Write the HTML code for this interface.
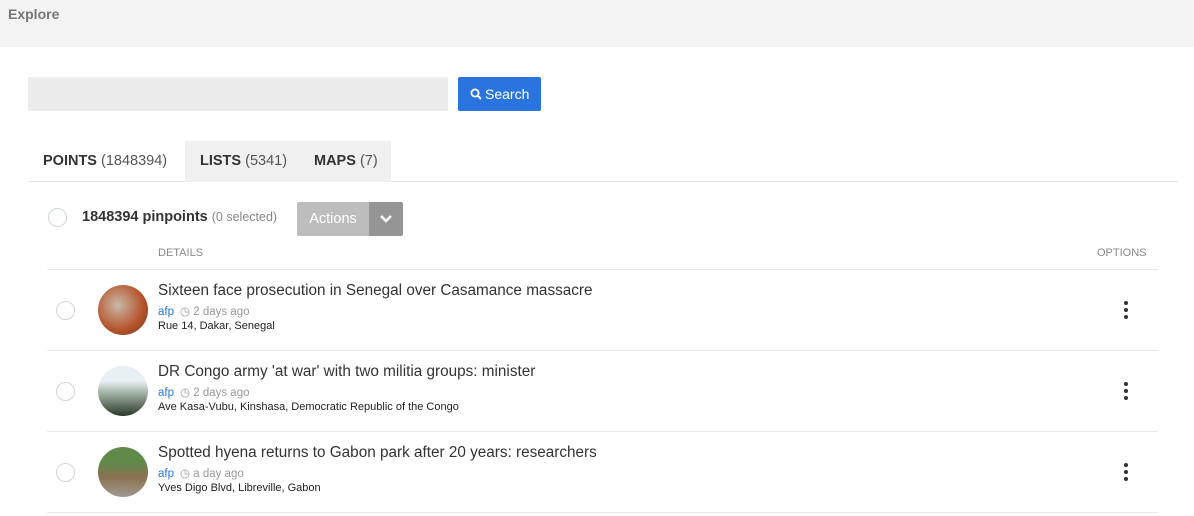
<!DOCTYPE html>
<html><head><style>
*{box-sizing:border-box;margin:0;padding:0}
body{width:1194px;height:516px;overflow:hidden;background:#fff;font-family:"Liberation Sans",sans-serif;color:#333;position:relative}
.top{position:absolute;left:0;top:0;width:1194px;height:47px;background:#f3f3f3}
.top span{position:absolute;left:8px;top:6px;font-size:14px;font-weight:bold;color:#777}
.inp{position:absolute;left:28px;top:77px;width:420px;height:34px;background:#ececec;border-radius:2px}
.btn{position:absolute;left:458px;top:77px;width:83px;height:34px;background:#2a74e0;border-radius:2px;color:#fff;font-size:14px;line-height:34px;padding-left:12px}
.tabs{position:absolute;left:28px;top:141px;width:1150px;height:41px;border-bottom:1px solid #e4e4e4}
.tab{position:absolute;top:0;height:41px;line-height:41px;font-size:14.5px;color:#444}
.tab b{color:#333}
.tab span{color:#555}
.circ{position:absolute;width:19px;height:19px;border:1px solid #cdd6dc;border-radius:50%}
.act{position:absolute;left:297px;top:202px;width:106px;height:34px;border-radius:2px;overflow:hidden}
.act .a{position:absolute;left:0;top:0;width:72px;height:34px;background:#bdbdbd;color:#fff;font-size:14.5px;line-height:34px;text-align:center}
.act .d{position:absolute;left:72px;top:0;width:34px;height:34px;background:#959595}
.hdr{position:absolute;top:247px;font-size:11px;color:#888}
.row{position:absolute;left:47px;width:1111px;height:81px;border-top:1px solid #e4eaee}
.av{position:absolute;left:51px;top:15px;width:50px;height:50px;border-radius:50%}
.t{position:absolute;left:111px;top:12px;font-size:15.3px;color:#333}
.m{position:absolute;left:111px;top:34px;font-size:11.5px;color:#999}
.m i{font-style:normal;color:#2a74e0;margin-right:6px}
.l{position:absolute;left:111px;top:50px;font-size:11px;color:#222}
.dots{position:absolute;left:1077px;top:31px;width:4px}
.dots div{width:4px;height:4px;border-radius:50%;background:#333;margin-bottom:3px}
</style></head><body>
<div class="top"><span>Explore</span></div>
<div class="inp"></div>
<div class="btn"><svg width="12" height="12" viewBox="0 0 12 12" style="vertical-align:-1px;margin-right:3px"><circle cx="5" cy="5" r="3.6" fill="none" stroke="#fff" stroke-width="1.8"/><path d="M7.6 7.6 L11 11" stroke="#fff" stroke-width="2"/></svg>Search</div>
<div class="tabs">
<div class="tab" style="left:15px"><b>POINTS</b> <span>(1848394)</span></div>
<div class="tab" style="left:157px;width:206px;background:#f0f0f0"></div>
<div class="tab" style="left:172px"><b>LISTS</b> <span>(5341)</span></div>
<div class="tab" style="left:286px"><b>MAPS</b> <span>(7)</span></div>
</div>
<div class="circ" style="left:48px;top:208px"></div>
<div style="position:absolute;left:82px;top:209px;font-size:14.5px"><b>1848394 pinpoints</b> <span style="font-size:12.5px;color:#888">(0 selected)</span></div>
<div class="act"><div class="a">Actions</div><div class="d"><svg width="34" height="34" viewBox="0 0 34 34"><path d="M12 14 L17 19 L22 14" fill="none" stroke="#fff" stroke-width="2.4"/></svg></div></div>
<div class="hdr" style="left:158px">DETAILS</div>
<div class="hdr" style="left:1097px">OPTIONS</div>

<div class="row" style="top:269px">
<div class="circ" style="left:9px;top:31px"></div>
<div class="av" style="background:radial-gradient(circle at 40% 40%,#c9b9a8,#b5522a 60%,#6b3a2a)"></div>
<div class="t">Sixteen face prosecution in Senegal over Casamance massacre</div>
<div class="m"><i>afp</i>&#9719; 2 days ago</div>
<div class="l">Rue 14, Dakar, Senegal</div>
<div class="dots"><div></div><div></div><div></div></div>
</div>
<div class="row" style="top:350px">
<div class="circ" style="left:9px;top:31px"></div>
<div class="av" style="background:linear-gradient(#e8f0f4 30%,#9fb0a0 55%,#2a3a2a)"></div>
<div class="t">DR Congo army 'at war' with two militia groups: minister</div>
<div class="m"><i>afp</i>&#9719; 2 days ago</div>
<div class="l">Ave Kasa-Vubu, Kinshasa, Democratic Republic of the Congo</div>
<div class="dots"><div></div><div></div><div></div></div>
</div>
<div class="row" style="top:431px;border-bottom:1px solid #e4eaee;height:82px">
<div class="circ" style="left:9px;top:31px"></div>
<div class="av" style="background:linear-gradient(#5f8a4a 30%,#8a7050 60%,#a09a90)"></div>
<div class="t">Spotted hyena returns to Gabon park after 20 years: researchers</div>
<div class="m"><i>afp</i>&#9719; a day ago</div>
<div class="l">Yves Digo Blvd, Libreville, Gabon</div>
<div class="dots"><div></div><div></div><div></div></div>
</div>
</body></html>
